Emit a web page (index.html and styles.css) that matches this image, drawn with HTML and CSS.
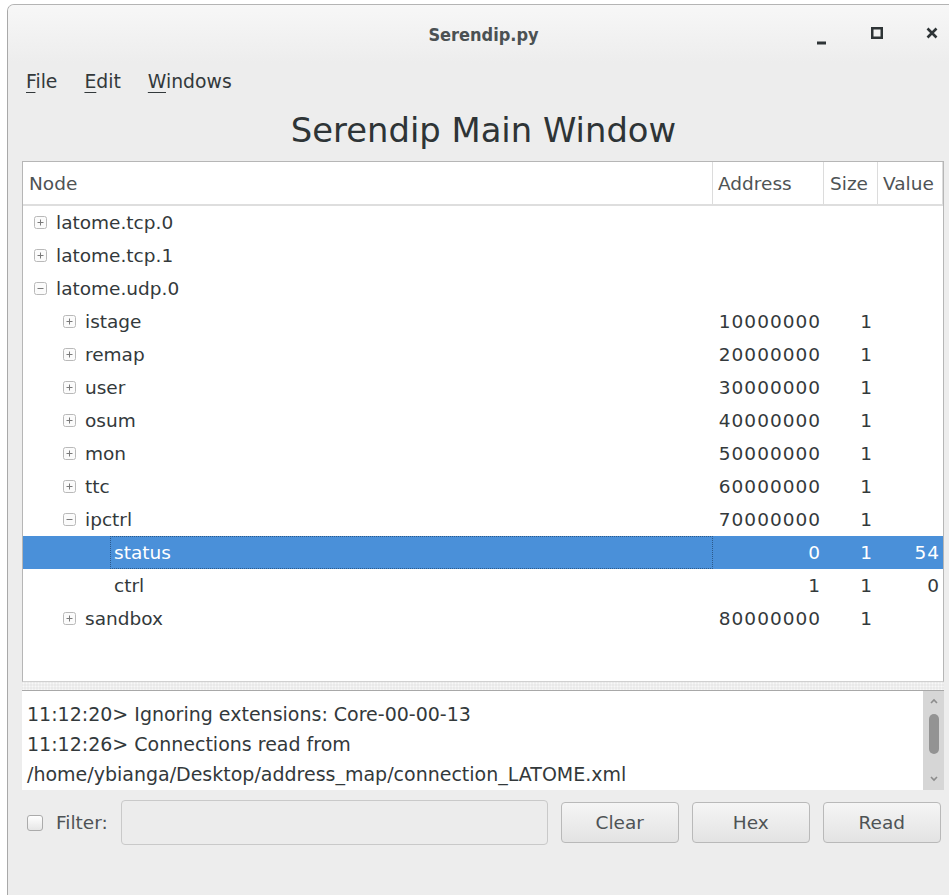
FILE: index.html
```html
<!DOCTYPE html>
<html lang="en">
<head>
<meta charset="utf-8">
<title>Serendip.py</title>
<link rel="stylesheet" href="styles.css">
</head>
<body>
<div class="window">
  <header class="titlebar">
    <span class="title">Serendip.py</span>
    <div class="controls">
      <svg class="ctl" width="12" height="18" viewBox="0 0 12 18"><rect x="1" y="14.5" width="9" height="3" fill="#2e3436"/></svg>
      <svg class="ctl" width="12" height="18" viewBox="0 0 12 18"><rect x="1.25" y="1.25" width="9.5" height="9.5" fill="none" stroke="#2e3436" stroke-width="2.5"/></svg>
      <svg class="ctl" width="12" height="18" viewBox="0 0 12 18"><path d="M1.5 1.5 L10.5 10.5 M10.5 1.5 L1.5 10.5" stroke="#2e3436" stroke-width="2.6" fill="none"/></svg>
    </div>
  </header>

  <nav class="menubar">
    <span class="menu-item"><u>F</u>ile</span>
    <span class="menu-item"><u>E</u>dit</span>
    <span class="menu-item"><u>W</u>indows</span>
  </nav>

  <h1 class="heading">Serendip Main Window</h1>

  <main class="content">
    <section class="tree">
      <div class="tree-head">
        <span class="hcell">Node</span>
        <span class="hcell">Address</span>
        <span class="hcell">Size</span>
        <span class="hcell">Value</span>
      </div>
      <div class="tree-body">
        <div class="row">
          <div class="node lv0"><svg class="exp" viewBox="0 0 13 13"><rect x="0.5" y="0.5" width="12" height="12" rx="2"/><path d="M3.5 6.5H9.5M6.5 3.5V9.5"/></svg><span class="label">latome.tcp.0</span></div>
          <div class="num addr"></div><div class="num size"></div><div class="num val"></div>
        </div>
        <div class="row">
          <div class="node lv0"><svg class="exp" viewBox="0 0 13 13"><rect x="0.5" y="0.5" width="12" height="12" rx="2"/><path d="M3.5 6.5H9.5M6.5 3.5V9.5"/></svg><span class="label">latome.tcp.1</span></div>
          <div class="num addr"></div><div class="num size"></div><div class="num val"></div>
        </div>
        <div class="row">
          <div class="node lv0"><svg class="exp" viewBox="0 0 13 13"><rect x="0.5" y="0.5" width="12" height="12" rx="2"/><path d="M3.5 6.5H9.5"/></svg><span class="label">latome.udp.0</span></div>
          <div class="num addr"></div><div class="num size"></div><div class="num val"></div>
        </div>
        <div class="row">
          <div class="node lv1"><svg class="exp" viewBox="0 0 13 13"><rect x="0.5" y="0.5" width="12" height="12" rx="2"/><path d="M3.5 6.5H9.5M6.5 3.5V9.5"/></svg><span class="label">istage</span></div>
          <div class="num addr">10000000</div><div class="num size">1</div><div class="num val"></div>
        </div>
        <div class="row">
          <div class="node lv1"><svg class="exp" viewBox="0 0 13 13"><rect x="0.5" y="0.5" width="12" height="12" rx="2"/><path d="M3.5 6.5H9.5M6.5 3.5V9.5"/></svg><span class="label">remap</span></div>
          <div class="num addr">20000000</div><div class="num size">1</div><div class="num val"></div>
        </div>
        <div class="row">
          <div class="node lv1"><svg class="exp" viewBox="0 0 13 13"><rect x="0.5" y="0.5" width="12" height="12" rx="2"/><path d="M3.5 6.5H9.5M6.5 3.5V9.5"/></svg><span class="label">user</span></div>
          <div class="num addr">30000000</div><div class="num size">1</div><div class="num val"></div>
        </div>
        <div class="row">
          <div class="node lv1"><svg class="exp" viewBox="0 0 13 13"><rect x="0.5" y="0.5" width="12" height="12" rx="2"/><path d="M3.5 6.5H9.5M6.5 3.5V9.5"/></svg><span class="label">osum</span></div>
          <div class="num addr">40000000</div><div class="num size">1</div><div class="num val"></div>
        </div>
        <div class="row">
          <div class="node lv1"><svg class="exp" viewBox="0 0 13 13"><rect x="0.5" y="0.5" width="12" height="12" rx="2"/><path d="M3.5 6.5H9.5M6.5 3.5V9.5"/></svg><span class="label">mon</span></div>
          <div class="num addr">50000000</div><div class="num size">1</div><div class="num val"></div>
        </div>
        <div class="row">
          <div class="node lv1"><svg class="exp" viewBox="0 0 13 13"><rect x="0.5" y="0.5" width="12" height="12" rx="2"/><path d="M3.5 6.5H9.5M6.5 3.5V9.5"/></svg><span class="label">ttc</span></div>
          <div class="num addr">60000000</div><div class="num size">1</div><div class="num val"></div>
        </div>
        <div class="row">
          <div class="node lv1"><svg class="exp" viewBox="0 0 13 13"><rect x="0.5" y="0.5" width="12" height="12" rx="2"/><path d="M3.5 6.5H9.5"/></svg><span class="label">ipctrl</span></div>
          <div class="num addr">70000000</div><div class="num size">1</div><div class="num val"></div>
        </div>
        <div class="row selected">
          <div class="node lv2 leaf"><span class="label focus">status</span></div>
          <div class="num addr">0</div><div class="num size">1</div><div class="num val">54</div>
        </div>
        <div class="row">
          <div class="node lv2 leaf"><span class="label">ctrl</span></div>
          <div class="num addr">1</div><div class="num size">1</div><div class="num val">0</div>
        </div>
        <div class="row">
          <div class="node lv1"><svg class="exp" viewBox="0 0 13 13"><rect x="0.5" y="0.5" width="12" height="12" rx="2"/><path d="M3.5 6.5H9.5M6.5 3.5V9.5"/></svg><span class="label">sandbox</span></div>
          <div class="num addr">80000000</div><div class="num size">1</div><div class="num val"></div>
        </div>
      </div>
    </section>

    <div class="splitter"></div>

    <section class="log">
      <div class="log-text">
        <div>11:12:20&gt; Ignoring extensions: Core-00-00-13</div>
        <div>11:12:26&gt; Connections read from</div>
        <div>/home/ybianga/Desktop/address_map/connection_LATOME.xml</div>
      </div>
      <div class="scrollbar">
        <svg class="arrow" width="8" height="6" viewBox="0 0 8 6"><path d="M1 5L4 2L7 5" fill="none" stroke="#8c8c8c" stroke-width="1.6"/></svg>
        <div class="thumb"></div>
        <svg class="arrow" width="8" height="6" viewBox="0 0 8 6"><path d="M1 1L4 4L7 1" fill="none" stroke="#8c8c8c" stroke-width="1.6"/></svg>
      </div>
    </section>

    <div class="filter-row">
      <span class="checkbox"></span>
      <span class="filter-label">Filter:</span>
      <span class="filter-input"></span>
      <button class="btn">Clear</button>
      <button class="btn">Hex</button>
      <button class="btn">Read</button>
    </div>
  </main>
</div>
</body>
</html>
```

FILE: styles.css
```css
* {
  box-sizing: border-box;
}

html,
body {
  margin: 0;
  height: 100%;
}

body {
  background: #ffffff;
  overflow: hidden;
  font-family: "DejaVu Sans", "Liberation Sans", sans-serif;
  font-size: 18.5px;
  color: #33393b;
}

/* window frame */
.window {
  margin: 4px 0 0 7px;
  width: 952px;
  height: 900px;
  background: #ededed;
  border-left: 1px solid #a9a9a9;
  border-top: 1px solid #b4b4b4;
  border-top-left-radius: 7px;
  overflow: hidden;
}

.titlebar {
  height: 58px;
  display: grid;
  grid-template-columns: 1fr auto 1fr;
  align-items: center;
  background: linear-gradient(#f7f7f7, #ededed);
}

.title {
  grid-column: 2;
  font-family: "DejaVu Sans Condensed", "DejaVu Sans", sans-serif;
  font-stretch: condensed;
  font-weight: bold;
  font-size: 18px;
  color: #4b5153;
}

.controls {
  grid-column: 3;
  justify-self: end;
  align-self: start;
  display: flex;
  gap: 43px;
  padding-right: 21px;
  margin-top: 22px;
}

.ctl {
  display: block;
}

/* menu */
.menubar {
  height: 36px;
  display: flex;
  align-items: center;
  gap: 27px;
  padding-left: 18px;
  font-size: 18.8px;
}

.menu-item u {
  text-underline-offset: 4px;
  text-decoration-thickness: 1px;
}

.heading {
  margin: 0;
  height: 62px;
  display: flex;
  align-items: center;
  justify-content: center;
  font-size: 33.8px;
  font-weight: normal;
  color: #2e3436;
}

.content {
  padding-left: 14px;
}

/* tree view */
.tree {
  width: 922px;
  height: 521px;
  background: #ffffff;
  border: 1px solid #b6b6b6;
  border-bottom-color: #d0d0d0;
  display: flex;
  flex-direction: column;
}

.tree-head,
.row {
  display: grid;
  grid-template-columns: 690px 111px 54px 65px;
}

.tree-head {
  height: 44px;
  border-bottom: 2px solid #dedede;
}

.hcell {
  display: flex;
  align-items: center;
  padding-left: 6px;
  border-right: 1px solid #dcdcdc;
  color: #4e5355;
}

.hcell:nth-child(2) {
  padding-left: 5px;
}

.hcell:nth-child(4) {
  padding-left: 5px;
}

.tree-body {
  flex: 1;
}

.row {
  height: 33px;
  align-items: stretch;
}

.node {
  display: flex;
  align-items: center;
}

.lv0 {
  padding-left: 11px;
}

.lv1 {
  padding-left: 40px;
}

.leaf.lv2 {
  padding-left: 87px;
}

.exp {
  width: 13px;
  height: 13px;
  flex: none;
  margin-right: 5px;
}

.exp rect {
  fill: #fbfbfb;
  stroke: #b9b9b9;
}

.exp path {
  stroke: #7a7a7a;
  stroke-width: 1;
  fill: none;
}

.label {
  flex: 1;
  height: 100%;
  display: flex;
  align-items: center;
  padding-left: 3px;
  border: 1px solid transparent;
}

.num {
  display: flex;
  align-items: center;
  justify-content: flex-end;
  letter-spacing: 1px;
}

.addr {
  padding-right: 3px;
}

.size {
  padding-right: 5px;
}

.val {
  padding-right: 3px;
}

.row.selected {
  background: #4a90d9;
  color: #ffffff;
}

.label.focus {
  border: 1px dotted #2c5a8c;
}

/* pane splitter */
.splitter {
  width: 922px;
  height: 8px;
  background-color: #e9e9e9;
  background-image: radial-gradient(circle, #f8f8f8 0.8px, transparent 1.2px);
  background-size: 3px 3px;
}

/* message log */
.log {
  width: 922px;
  height: 100px;
  display: flex;
  background: #ffffff;
  border-top: 1px solid #a8a8a8;
}

.log-text {
  flex: 1;
  padding: 8px 0 0 5px;
  line-height: 30px;
  font-size: 19px;
  white-space: nowrap;
  overflow: hidden;
}

.scrollbar {
  width: 21px;
  background: #d6d6d6;
  display: flex;
  flex-direction: column;
  align-items: center;
  padding-top: 7px;
}

.arrow {
  display: block;
}

.thumb {
  width: 10px;
  height: 40px;
  margin-top: 10px;
  margin-bottom: 22px;
  border-radius: 5px;
  background: #939393;
}

/* filter / action row */
.filter-row {
  width: 922px;
  height: 55px;
  padding-top: 10px;
  display: flex;
  align-items: center;
}

.checkbox {
  width: 16px;
  height: 16px;
  margin-left: 5px;
  border: 1px solid #ababab;
  border-radius: 3px;
  background: linear-gradient(#ffffff, #e6e6e6);
}

.filter-label {
  margin-left: 13px;
  color: #4e5355;
}

.filter-input {
  width: 427px;
  height: 45px;
  margin-left: 13px;
  border: 1px solid #c9c9c9;
  border-radius: 4px;
  background: #ececec;
}

.btn {
  width: 118px;
  height: 41px;
  margin-left: 13px;
  border: 1px solid #b9b9b9;
  border-radius: 4px;
  background: linear-gradient(#f5f5f5, #e3e3e3);
  font-family: inherit;
  font-size: 18.5px;
  color: #4e5355;
  padding: 0;
}
```
